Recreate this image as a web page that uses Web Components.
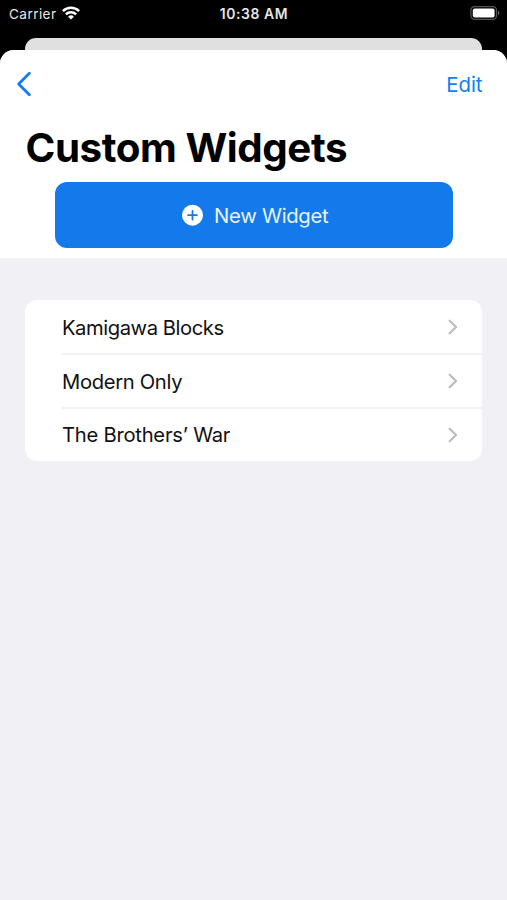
<!DOCTYPE html>
<html lang="en">
<head>
<meta charset="utf-8">
<title>Custom Widgets</title>
<style>
html,body{margin:0;height:100%;background:#000}
body{font-family:Inter,"Liberation Sans",sans-serif;color:#000;overflow:hidden}
</style>
</head>
<body>
<widgets-app></widgets-app>
<script>
function define(name, html){
  const t=document.createElement('template');
  t.innerHTML=html;
  customElements.define(name, class extends HTMLElement{
    constructor(){super();this.attachShadow({mode:'open'}).append(t.content.cloneNode(true));}
  });
}
define('status-bar', `<style>
:host{display:grid;grid-template-columns:1fr auto 1fr;align-items:center;height:28px;color:#e6e6e6;box-sizing:border-box;padding:0 7px 0 9px;font-size:13.6px;line-height:28px}
.left{display:flex;align-items:center;gap:5px}
.carrier{letter-spacing:.42px}
.time{font-weight:600;letter-spacing:.6px;font-size:13.9px;margin-right:1px}
.right{display:flex;justify-content:flex-end}
svg{display:block}
</style>
<div class="left"><span class="carrier">Carrier</span>
<svg width="18" height="14" viewBox="0 0 18 14" style="margin-top:-2px"><g fill="none" stroke="#fff" stroke-width="2.5"><path d="M.9 5.1a11.5 11.5 0 0 1 16.2 0"/><path d="M3.9 8.3a7.2 7.2 0 0 1 10.2 0"/></g><path d="M9 13.6 6.1 10.7a4.1 4.1 0 0 1 5.8 0Z" fill="#fff"/></svg></div>
<span class="time">10:38 AM</span>
<div class="right"><svg width="30" height="14" viewBox="0 0 30 14" style="margin-top:-2px"><rect x=".9" y=".7" width="25.6" height="12.6" rx="3.6" fill="#000" stroke="#555" stroke-width="1.2"/><rect x="2.8" y="2.6" width="21.8" height="8.8" rx="2" fill="#fff"/><path d="M28 4.8a2.4 2.4 0 0 1 0 4.4Z" fill="#666"/></svg></div>`);
define('back-sheet', `<style>
:host{display:block;height:12px;margin:10px 25px 0;background:#e0e0e0;border-radius:11px 11px 0 0}
</style>`);
define('nav-bar', `<style>
:host{display:flex;justify-content:space-between;align-items:center;height:68px;padding:0 24.5px 0 16px;color:#127df8;font-size:20.4px}
span{line-height:68px;padding-top:2px;box-sizing:border-box}
svg{display:block}
</style>
<svg width="16" height="26" viewBox="0 0 16 26"><path d="M13.4 2.2 2.6 13l10.8 10.8" fill="none" stroke="currentColor" stroke-width="2.8" stroke-linecap="round" stroke-linejoin="round"/></svg>
<span><slot></slot></span>`);
define('page-title', `<style>
:host{display:block;height:64px;padding-left:25.5px;font-size:40.3px;font-weight:700;line-height:60px;letter-spacing:-.42px;white-space:nowrap}
</style><slot></slot>`);
define('new-button', `<style>
:host{display:flex;align-items:center;justify-content:center;gap:11.5px;height:65.5px;margin:0 54px 0 55px;padding-left:2px;border-radius:12px;background:#147aec;color:#e8f2fe;font-size:20.3px;letter-spacing:-.3px;white-space:nowrap}
svg{display:block}
span{padding-top:1px}
</style>
<svg width="21" height="22" viewBox="0 0 21 22"><circle cx="10.5" cy="11.2" r="10.5" fill="#fff"/><path d="M10.5 6.8v8.8M6.1 11.2h8.8" stroke="#147aec" stroke-width="1.8" stroke-linecap="round"/></svg>
<span><slot></slot></span>`);
define('widget-list', `<style>
:host{display:block;margin:42px 25px 0;background:#fff;border-radius:12px;overflow:hidden}
</style><slot></slot>`);
define('widget-row', `<style>
:host{display:block;padding-left:37px}
.r{display:flex;align-items:center;justify-content:space-between;height:53.5px;padding-right:24.2px;box-sizing:border-box;font-size:20.2px;letter-spacing:var(--tracking,-.3px);color:#111;white-space:nowrap}
.r span{padding-top:1px}
:host(:first-child) .r{height:53px;padding-top:1.5px}
:host(:first-child) .r span{padding-top:0}
:host(:last-child) .r{height:54.5px}
:host(:not(:first-child)) .r{border-top:2px solid #f2f2f4}
:host(:last-child) .r span{padding-top:0;margin-top:-1px}
svg{display:block}
</style><div class="r"><span><slot></slot></span>
<svg width="10" height="16" viewBox="0 0 10 16"><path d="M1.6 1.7 8.1 8l-6.5 6.3" fill="none" stroke="#bcbcbf" stroke-width="2.2" stroke-linecap="round" stroke-linejoin="round"/></svg></div>`);
define('widgets-app', `<style>
:host{display:flex;flex-direction:column;height:900px}
.sheet{flex:1;background:#f0f0f5;border-radius:14px 14px 0 0;overflow:hidden}
.head{background:#fff;height:208px}
</style>
<status-bar></status-bar><back-sheet></back-sheet>
<div class="sheet"><div class="head"><nav-bar>Edit</nav-bar><page-title>Custom Widgets</page-title><new-button>New Widget</new-button></div>
<widget-list><widget-row style="--tracking:-.44px">Kamigawa Blocks</widget-row><widget-row style="--tracking:-.32px">Modern Only</widget-row><widget-row style="--tracking:-.24px">The Brothers’ War</widget-row></widget-list></div>`);
</script>
</body>
</html>
